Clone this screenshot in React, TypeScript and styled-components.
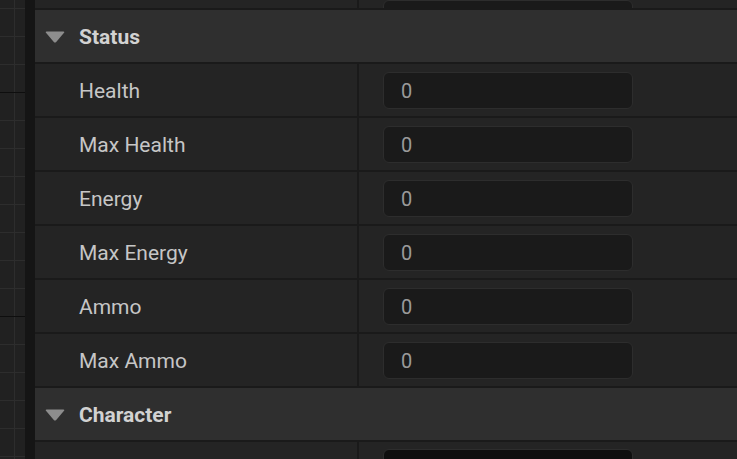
import React from "react";
import styled, { createGlobalStyle } from "styled-components";

const Global = createGlobalStyle`
  html, body { margin: 0; padding: 0; background: #202020; }
  body { font-family: Roboto, "Noto Sans", "Liberation Sans", sans-serif; }
  #root { width: 737px; height: 459px; overflow: hidden; }
`;

const Page = styled.div`
  display: flex;
  width: 737px;
  height: 459px;
  overflow: hidden;
`;

const Graph = styled.div`
  width: 25px;
  flex: none;
  background-color: #212121;
  background-image:
    linear-gradient(to bottom, transparent 84px, #0e0e0e 84px, #0e0e0e 85px, transparent 85px),
    linear-gradient(to bottom, #2d2d2d 0, #2d2d2d 1px, transparent 1px),
    linear-gradient(to right, transparent 14px, #2d2d2d 14px, #2d2d2d 15px, transparent 15px);
  background-size: 100% 224px, 100% 28px, 100% 100%;
  background-position: 0 8px, 0 8px, 0 0;
  background-repeat: repeat-y, repeat-y, no-repeat;
`;

const Strip = styled.div`
  width: 10px;
  flex: none;
  background: #151515;
`;

const Panel = styled.div`
  flex: 1;
  display: flex;
  flex-direction: column;
  gap: 2px;
  background: #1a1a1a;
  min-width: 0;
`;

const Header = styled.div`
  flex: none;
  height: 52px;
  display: flex;
  align-items: center;
  background: #2f2f2f;
  padding-left: 10px;
  gap: 14px;
  color: #d2d2d2;
  font-size: 21px;
  font-weight: 700;
  padding-top: 1px;
  box-sizing: border-box;
`;

const Row = styled.div<{ $h?: number }>`
  flex: none;
  height: ${(p) => p.$h ?? 52}px;
  display: grid;
  grid-template-columns: 322px 1fr;
  column-gap: 2px;
  background: #1a1a1a;
  overflow: hidden;
`;

const NameCell = styled.div`
  background: #242424;
  display: flex;
  align-items: center;
  padding-left: 44px;
  padding-top: 1px;
  color: #c6c6c6;
  font-size: 21px;
  white-space: nowrap;
`;

const ValueCell = styled.div<{ $align?: "flex-start" | "flex-end" | "center" }>`
  background: #242424;
  display: flex;
  align-items: ${(p) => p.$align ?? "center"};
  padding-left: 24px;
`;

const NumberBox = styled.div<{ $dark?: boolean; $offset?: number }>`
  width: 250px;
  height: 37px;
  flex: none;
  box-sizing: border-box;
  border: 1px solid #2d2d2d;
  border-radius: 6px;
  background: ${(p) => (p.$dark ? "#0f0f0f" : "#1a1a1a")};
  display: flex;
  align-items: center;
  padding-left: 17px;
  padding-top: 1px;
  color: #9a9a9a;
  font-size: 20px;
  margin-top: ${(p) => p.$offset ?? 0}px;
`;

const Arrow = () => (
  <svg width="20" height="12" viewBox="0 0 20 12" style={{ flex: "none" }}>
    <path d="M1.5 0.5 H18.5 Q20 0.5 19 1.8 L11.2 11 Q10 12.2 8.8 11 L1 1.8 Q0 0.5 1.5 0.5 Z" fill="#8d8d8d" />
  </svg>
);

const sections: { title: string; fields: string[] }[] = [
  { title: "Status", fields: ["Health", "Max Health", "Energy", "Max Energy", "Ammo", "Max Ammo"] },
];

export default function App() {
  return (
    <>
      <Global />
      <Page>
        <Graph />
        <Strip />
        <Panel>
          <Row $h={8}>
            <NameCell />
            <ValueCell $align="flex-end">
              <NumberBox style={{ marginBottom: 6 }} />
            </ValueCell>
          </Row>
          {sections.map((s) => (
            <React.Fragment key={s.title}>
              <Header>
                <Arrow />
                {s.title}
              </Header>
              {s.fields.map((f) => (
                <Row key={f}>
                  <NameCell>{f}</NameCell>
                  <ValueCell>
                    <NumberBox>0</NumberBox>
                  </ValueCell>
                </Row>
              ))}
            </React.Fragment>
          ))}
          <Header>
            <Arrow />
            Character
          </Header>
          <Row>
            <NameCell />
            <ValueCell $align="flex-start">
              <NumberBox $dark $offset={7} />
            </ValueCell>
          </Row>
        </Panel>
      </Page>
    </>
  );
}
